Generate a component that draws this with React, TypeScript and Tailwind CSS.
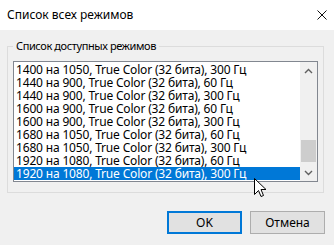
const modes = [
  "1400 на 1050, True Color (32 бита), 300 Гц",
  "1440 на 900, True Color (32 бита), 60 Гц",
  "1440 на 900, True Color (32 бита), 300 Гц",
  "1600 на 900, True Color (32 бита), 60 Гц",
  "1600 на 900, True Color (32 бита), 300 Гц",
  "1680 на 1050, True Color (32 бита), 60 Гц",
  "1680 на 1050, True Color (32 бита), 300 Гц",
  "1920 на 1080, True Color (32 бита), 60 Гц",
  "1920 на 1080, True Color (32 бита), 300 Гц",
];

const selected = 8;

const ModeList = () => (
  <div className="flex h-[121px] border border-[#828790] bg-white">
    <div className="flex-1 py-[1px]">
      {modes.map((m, i) => (
        <div
          key={i}
          className={`h-[13px] px-[2px] leading-[13px] tracking-[-0.17px] whitespace-nowrap ${
            i === selected ? "bg-[#0078d7] text-white" : "text-black"
          }`}
        >
          {m}
        </div>
      ))}
    </div>
    {/* scrollbar */}
    <div className="flex w-[17px] flex-col bg-[#f0f0f0]">
      <div className="flex h-[17px] items-center justify-center">
        <svg width="9" height="6" viewBox="0 0 9 6">
          <path d="M1 5 L4.5 1.5 L8 5" fill="none" stroke="#606060" strokeWidth="1.4" />
        </svg>
      </div>
      <div className="flex-1 pt-[61px]">
        <div className="mx-auto h-[22px] w-[15px] bg-[#cdcdcd]" />
      </div>
      <div className="flex h-[17px] items-center justify-center">
        <svg width="9" height="6" viewBox="0 0 9 6">
          <path d="M1 1 L4.5 4.5 L8 1" fill="none" stroke="#606060" strokeWidth="1.4" />
        </svg>
      </div>
    </div>
  </div>
);

export default function App() {
  return (
    <div
      className="relative h-[245px] w-[334px] overflow-hidden bg-[#f0f0f0] text-[12px] text-black"
      style={{ fontFamily: '"Noto Sans", "Open Sans", sans-serif' }}
    >
      {/* title bar */}
      <div className="flex h-[30px] items-center justify-between bg-white pl-[7px] pr-[7px]">
        <span className="text-[12px]">Список всех режимов</span>
        <svg width="10" height="10" viewBox="0 0 10 10">
          <path d="M0.5 0.5 L9.5 9.5 M9.5 0.5 L0.5 9.5" stroke="#111" strokeWidth="1" />
        </svg>
      </div>

      {/* group box */}
      <fieldset className="mx-[7px] mr-[10px] mt-[9px] border border-[#dcdcdc] px-[5px] pb-[10px]">
        <legend className="px-[3px] text-[11px] leading-[14px] tracking-[-0.4px]">
          Список доступных режимов
        </legend>
        <div className="mt-[8px]">
          <ModeList />
        </div>
      </fieldset>

      {/* buttons */}
      <div className="mt-[18px] flex justify-end gap-[8px] pr-[9px]">
        <button className="h-[23px] w-[75px] border-2 border-[#0078d7] bg-[#e1e1e1] text-[12px]">OK</button>
        <button className="h-[23px] w-[75px] border border-[#adadad] bg-[#e1e1e1] text-[12px]">Отмена</button>
      </div>

      {/* mouse pointer */}
      <svg
        width="13"
        height="21"
        viewBox="0 0 13 21"
        className="absolute left-[254px] top-[178px]"
      >
        <path
          d="M0.5 0.5 L0.5 16.5 L4.5 12.5 L7 18.5 L9.5 17.5 L7 11.5 L12 11.5 Z"
          fill="white"
          stroke="black"
          strokeWidth="1"
          strokeLinejoin="miter"
        />
      </svg>
    </div>
  );
}
